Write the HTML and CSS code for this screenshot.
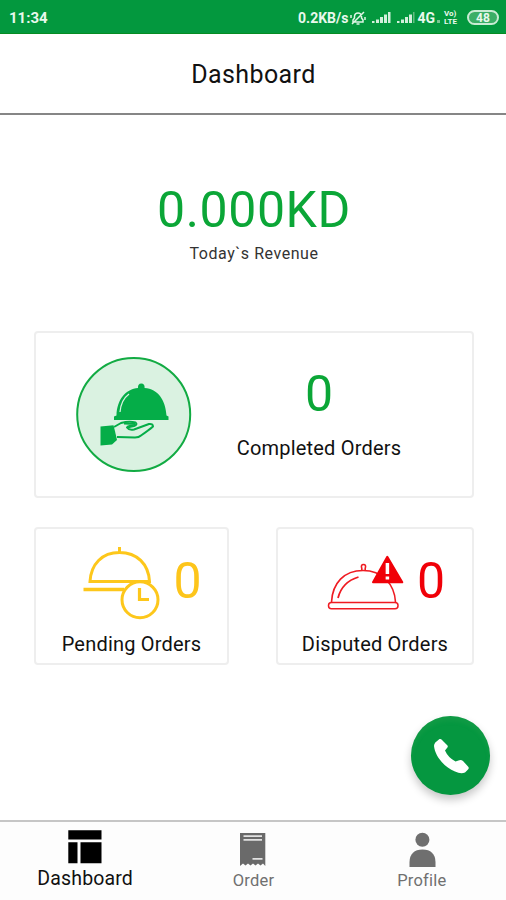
FILE: index.html
```html
<!DOCTYPE html>
<html lang="en">
<head>
<meta charset="utf-8">
<title>Dashboard</title>
<link rel="stylesheet" href="styles.css">
</head>
<body>
<div class="screen">
  <div class="status">
    <span class="time">11:34</span>
    <span class="speed">0.2KB/s</span>
    <svg class="mute" width="16" height="16" viewBox="0 0 16 16"><path d="M3 12V10L4.500 8V6Q5 3 8 3T11.500 6V8L13 10V12ZM6.500 14H9.500M2 14L14 2M1 5V8M15 7V10" fill="none" stroke="#e0f5e6" stroke-width="1.500"/></svg>
    <svg class="signal" width="20" height="13" viewBox="0 0 20 13"><path d="M1 10h2.500v2H1zM5 8.500h3V12H5zM9 6h3v6H9zM13 3.500h3V12H13zM17 1h2.500v11H17z" fill="#d3efdc"/></svg>
    <svg class="signal second" width="20" height="13" viewBox="0 0 20 13"><path d="M1 10h2.500v2H1zM5 8.500h3V12H5zM9 6h3v6H9zM13 3.500h3V12H13z" fill="#d3efdc"/><path d="M17 1h1.500v11H17z" fill="#63bd81"/></svg>
    <span class="net">4G</span><span class="dot"></span>
    <span class="volte"><span>Vo)</span><span>LTE</span></span>
    <span class="battery">48</span>
  </div>
  <header class="header"><h1>Dashboard</h1></header>
  <main class="main">
    <div class="revenue">0.000KD</div>
    <div class="revenue-label">Today`s Revenue</div>
    <section class="card completed">
      <svg class="badge" width="116" height="116" viewBox="76 356 116 116">
        <circle cx="133.700" cy="414.500" r="56.500" fill="#daf2e1" stroke="#12ab43" stroke-width="2"/>
        <path d="M116.500 415.500C117 399 126 389 138 388Q137.700 383.500 141.300 383.500T144.600 388C158 389 165.500 400 166.500 415.500L168.500 416.500V420H114V416.500Z" fill="#05ad48"/>
        <path d="M120 412Q121 400 129 394" fill="none" stroke="#daf2e1" stroke-width="1.300"/>
        <path d="M100.500 426.500L113.500 425.200Q115 431 117 440L112 444.500L100.500 445.500Z" fill="#05ad48"/>
        <path d="M114 427L121 423Q129 421 135.500 422.500Q138 424.500 134 426L127 427.500Q129 430.500 134 429.500L149 424Q153 423.500 153 426.500Q149 430 141 435.500Q139 437.500 135 437.500L117 437" fill="none" stroke="#05ad48" stroke-width="2" stroke-linejoin="round"/>
        <path d="M124 423.500L135 424L127 427" fill="none" stroke="#05ad48" stroke-width="2.200"/>
      </svg>
      <div class="summary"><span class="count green">0</span><span class="label">Completed Orders</span></div>
    </section>
    <div class="pair">
      <section class="card small pending">
        <div class="figure">
          <svg width="78" height="76" viewBox="84 545 78 76" fill="none" stroke="#fdc71b">
            <path d="M91 581.500C92 564 103 552.500 120.500 552.500S149.500 564 150.500 581.500ZM120.500 547V553" stroke-width="3"/>
            <path d="M84.500 589.500H125" stroke-width="3.500"/>
            <circle cx="141" cy="599.800" r="18" fill="#fff" stroke-width="3"/>
            <path d="M140.500 588V599.500H150" stroke-width="3.200"/>
          </svg>
          <span class="count yellow">0</span>
        </div>
        <span class="label">Pending Orders</span>
      </section>
      <section class="card small disputed">
        <div class="figure">
          <svg width="78" height="76" viewBox="327 545 78 76" fill="none" stroke="#ef1b22">
            <path d="M331.500 602C332.500 583 344 570.500 363 570.500S394.500 584 395.500 602" stroke-width="1.600"/>
            <rect x="328.500" y="602.500" width="69.500" height="6.200" rx="3" stroke-width="1.500"/>
            <path d="M338 598Q342 582 358.500 577" stroke-width="1.800"/>
            <path d="M361.800 571V568.500Q360.500 564.500 363.500 564.500T365.200 568.500V571" stroke-width="1.600"/>
            <path d="M387.300 556.800L402.300 582.300H373Z" fill="#f00008" stroke="#f00008" stroke-width="2" stroke-linejoin="round"/>
            <path d="M387.400 563V574M387.400 576.500V579.500" stroke="#fff" stroke-width="3.500"/>
          </svg>
          <span class="count red">0</span>
        </div>
        <span class="label">Disputed Orders</span>
      </section>
    </div>
  </main>
  <button class="call" aria-label="Call"><svg width="36" height="36" viewBox="432 737 36 36"><path d="M434.300 741.500L438.500 738Q440 737.500 441 739L446.500 744.500Q447.300 746 446 747L444 749.500Q447 756.500 454.500 760.500L457.500 759.500Q460 758.500 462 760L467 765.500Q468.500 767 467 768.500L464 771.500Q460 773.500 454 770.500C443 766 434 755 433 745Q433 743 434.300 741.500Z" fill="#fff"/></svg></button>
  <nav class="nav">
    <a class="tab active"><svg width="36" height="36" viewBox="67 829 36 36"><path d="M68.300 830.300h33.200v9.300H68.300zM68.300 842.300h9.200v21H68.300zM80.500 842.300h21v21h-21z" fill="#000"/></svg><span>Dashboard</span></a>
    <a class="tab order"><svg width="28" height="36" viewBox="240 831 28 36"><path d="M241 833H266.300V866L264 863.500L261.500 865.500L259 863.500L256.500 865.500L254 863.500L251.500 865.500L249 863.500L246.500 865.500L244 863.500L241 866Z" fill="#6a6a6a"/><path d="M244.500 836.200H263M244.500 839.900H263M253.500 858.900H263.500" stroke="#e2e2e2" stroke-width="1.700"/></svg><span>Order</span></a>
    <a class="tab profile"><svg width="28" height="36" viewBox="408 831 28 36"><circle cx="422.400" cy="839.800" r="7" fill="#6f6f6f"/><path d="M409.500 867V862Q410 849.500 422.500 849.500T435.500 862V867Z" fill="#6f6f6f"/></svg><span>Profile</span></a>
  </nav>
</div>
</body>
</html>
```

FILE: styles.css
```css
* { box-sizing: border-box; }
body { margin: 0; background: #fff; font-family: Roboto, sans-serif; color: #111; }
.screen { width: 506px; height: 900px; display: flex; flex-direction: column; position: relative; overflow: hidden; }
.status { height: 34px; flex: none; background: #03983e; border-bottom: 1px solid #068c22; display: flex; align-items: center; color: #e9f8ed; padding: 2px 7px 0 9px; font-weight: 700; font-size: 13px; }
.time { font-size: 15px; flex: 1; }
.speed { font-size: 14px; margin-right: 2px; }
.signal { margin-left: 5px; }
.signal.second { margin-left: 5px; }
.net { margin-left: 1px; font-size: 14px; }
.dot { width: 3px; height: 3px; background: #79c591; margin: 7px 4px 0 2px; }
.volte { display: flex; flex-direction: column; font-size: 8px; line-height: 8px; width: 17px; }
.battery { margin-left: 6px; width: 32px; height: 15px; border: 2px solid #c9ebd3; border-radius: 8px; background: #3bae66; font-size: 12px; line-height: 12px; text-align: center; }
.header { height: 81px; flex: none; border-bottom: 2px solid #868686; display: flex; align-items: center; justify-content: center; }
.header h1 { margin: 3px 0 0 1px; font-size: 25px; line-height: 30px; font-weight: 400; letter-spacing: .4px; }
.main { flex: 1; display: flex; flex-direction: column; align-items: center; padding: 65px 0 0 2px; }
.revenue { font-size: 50px; line-height: 60px; letter-spacing: .6px; color: #0ba637; }
.revenue-label { font-size: 16px; line-height: 20px; margin-top: 4px; letter-spacing: .55px; color: #333; }
.card { border: 2px solid #eee; border-radius: 4px; background: #fff; }
.completed { width: 440px; height: 167px; margin-top: 67px; display: flex; padding: 23px 0 0 40px; }
.badge { flex: none; }
.summary { width: 170px; margin-left: 42px; display: flex; flex-direction: column; align-items: center; }
.count { font-size: 50px; line-height: 60px; }
.completed .count { margin-top: 8px; }
.green { color: #0ba637; }
.yellow { color: #fdc51b; }
.red { color: #f00008; }
.label { font-size: 20px; line-height: 26px; letter-spacing: .2px; white-space: nowrap; }
.completed .label { margin-top: 11px; }
.pair { width: 440px; margin-top: 29px; display: flex; justify-content: space-between; }
.small { width: 195px; height: 138px; display: flex; flex-direction: column; align-items: center; padding-top: 16px; }
.disputed { width: 198px; }
.figure { display: flex; gap: 12px; padding-left: 22px; }
.figure .count { margin-top: 6px; }
.small .label { margin-top: 10px; }
.call { position: absolute; left: 411px; top: 716px; width: 79px; height: 79px; border: 0; border-radius: 50%; background: #059740; padding: 0; display: flex; align-items: center; justify-content: center; box-shadow: 0 5px 9px rgba(0,0,0,.22), inset 0 5px 4px rgba(60,170,90,.2); }
.nav { height: 80px; flex: none; border-top: 2px solid #c6c6c6; background: #fdfdfd; display: grid; grid-template-columns: repeat(3, 1fr); padding-left: 1px; }
.tab { display: flex; flex-direction: column; align-items: center; color: #707070; font-size: 16.5px; line-height: 20px; letter-spacing: .2px; padding-top: 9px; }
.tab span { margin-top: 4px; }
.tab.active { color: #111; font-size: 19.5px; line-height: 24px; padding-top: 7px; letter-spacing: .15px; }
.tab.active span { margin-top: 2px; }
```
